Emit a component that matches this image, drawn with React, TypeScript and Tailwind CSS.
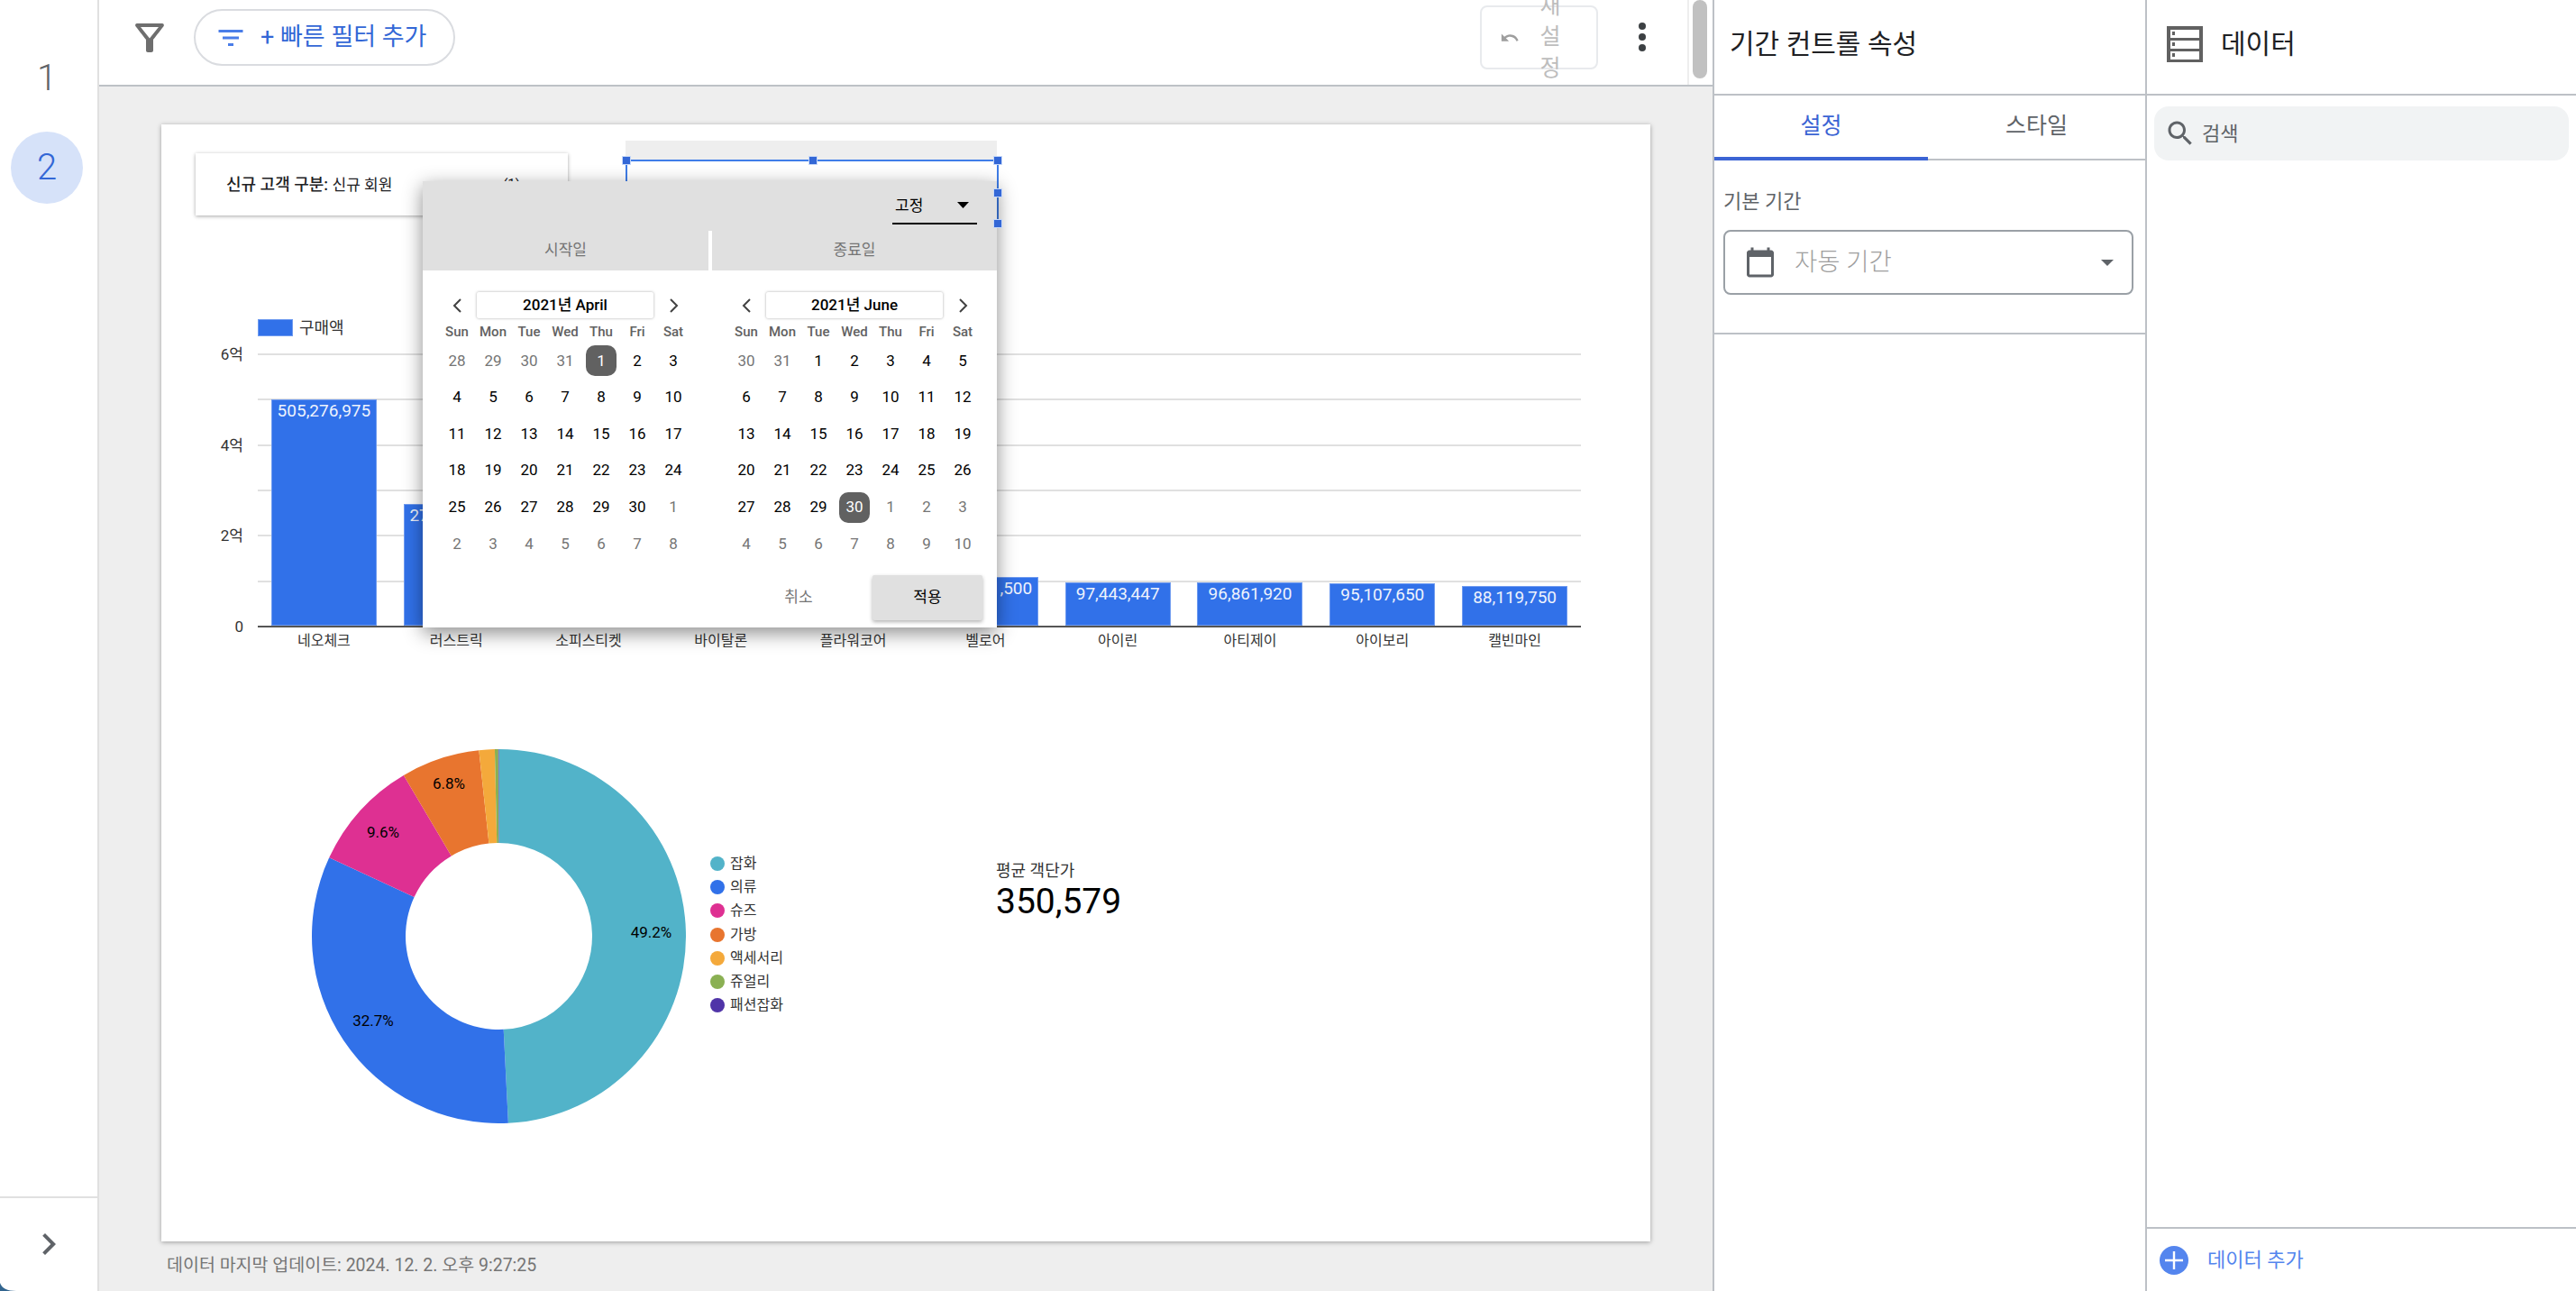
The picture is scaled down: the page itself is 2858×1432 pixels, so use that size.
const bars = [
  { name: "네오체크", value: 505276975, label: true },
  { name: "러스트릭", value: 272418300, label: true },
  { name: "소피스티켓", value: 186204150, label: false },
  { name: "바이탈론", value: 152730600, label: false },
  { name: "플라워코어", value: 121958250, label: false },
  { name: "벨로어", value: 109241500, label: true },
  { name: "아이린", value: 97443447, label: true },
  { name: "아티제이", value: 96861920, label: true },
  { name: "아이보리", value: 95107650, label: true },
  { name: "캘빈마인", value: 88119750, label: true },
]

const slices = [
  { name: "잡화", share: 49.2, color: "#52b3c9", label: "49.2%", lx: 169, ly: -4.5 },
  { name: "의류", share: 32.7, color: "#3171e9", label: "32.7%", lx: -139.5, ly: 93.5 },
  { name: "슈즈", share: 9.6, color: "#de3092", label: "9.6%", lx: -128.5, ly: -115.5 },
  { name: "가방", share: 6.8, color: "#e8752f", label: "6.8%", lx: -55.5, ly: -169.5 },
  { name: "액세서리", share: 1.35, color: "#f4a93b", label: "", lx: 0, ly: 0 },
  { name: "쥬얼리", share: 0.3, color: "#8ab053", label: "", lx: 0, ly: 0 },
  { name: "패션잡화", share: 0.05, color: "#5034a8", label: "", lx: 0, ly: 0 },
]

function point(r: number, pct: number) {
  const a = (pct / 100) * Math.PI * 2
  return `${207.5 + r * Math.sin(a)} ${207.5 - r * Math.cos(a)}`
}

function slicePath(from: number, to: number) {
  const large = to - from > 50 ? 1 : 0
  return `M${point(207.5, from)} A207.5 207.5 0 ${large} 1 ${point(207.5, to)} L${point(103.5, to)} A103.5 103.5 0 ${large} 0 ${point(103.5, from)} Z`
}

function Donut() {
  let start = 0
  return (
    <svg width="415" height="415" viewBox="0 0 415 415">
      {slices.map((s) => {
        const d = slicePath(start, start + s.share)
        start += s.share
        return <path key={s.name} d={d} fill={s.color} />
      })}
      {slices.filter((s) => s.label).map((s) => (
        <text key={s.name} x={207.5 + s.lx} y={207.5 + s.ly} textAnchor="middle" dominantBaseline="central" fontSize="17" fill="#000">
          {s.label}
        </text>
      ))}
    </svg>
  )
}

function BarChart() {
  return (
    <div className="absolute left-[107px] top-[254px] w-[1468px]">
      <div className="relative h-[304px]">
        <div className="absolute inset-0 flex flex-col justify-between">
          {[0, 1, 2, 3, 4, 5].map((i) => (
            <div key={i} className="h-[2px] bg-[#e0e0e0]" />
          ))}
          <div className="h-[2px] bg-[#555555]" />
        </div>
        <div className="relative grid h-full grid-cols-10 items-end pb-[2px]">
          {bars.map((b) => (
            <div key={b.name} className="flex justify-center">
              <div
                className="w-[117px] border border-[#6f9bf0] bg-[#3171e9] text-center text-[19px] leading-[24px] text-[#eef3fd]"
                style={{ height: (b.value / 600000000) * 298 }}
              >
                {b.label && b.value.toLocaleString("en-US")}
              </div>
            </div>
          ))}
        </div>
      </div>
      <div className="mt-[5px] grid grid-cols-10">
        {bars.map((b) => (
          <div key={b.name} className="text-center text-[16px] leading-[20px] text-[#333333]">
            {b.name}
          </div>
        ))}
      </div>
    </div>
  )
}

function monthCells(prevStart: number, prevEnd: number, nextCount: number) {
  const cells: { day: number; muted: boolean }[] = []
  for (let d = prevStart; d <= prevEnd; d++) cells.push({ day: d, muted: true })
  for (let d = 1; d <= 30; d++) cells.push({ day: d, muted: false })
  for (let d = 1; d <= nextCount; d++) cells.push({ day: d, muted: true })
  return cells
}

function Chevron({ left }: { left?: boolean }) {
  return (
    <svg width="12" height="16" viewBox="0 0 12 16" fill="none" stroke="#424242" strokeWidth="2">
      <path d={left ? "M10 1 L3 8 L10 15" : "M2 1 L9 8 L2 15"} />
    </svg>
  )
}

function Month({ title, cells, selected }: { title: string; cells: { day: number; muted: boolean }[]; selected: number }) {
  return (
    <div className="w-[280px]">
      <div className="flex h-[29px] items-center">
        <div className="flex w-[42px] justify-center pr-[3px]">
          <Chevron left />
        </div>
        <div className="flex h-[29px] w-[196px] items-center justify-center rounded-[2px] bg-white text-[17px] font-medium text-black shadow-[0_0_3px_rgba(0,0,0,0.35)]">
          {title}
        </div>
        <div className="flex w-[42px] justify-center pl-[3px]">
          <Chevron />
        </div>
      </div>
      <div className="mt-[4px] grid h-[23px] grid-cols-7">
        {["Sun", "Mon", "Tue", "Wed", "Thu", "Fri", "Sat"].map((d) => (
          <div key={d} className="text-center text-[15px] font-medium leading-[23px] text-[#616161]">
            {d}
          </div>
        ))}
      </div>
      <div className="grid grid-cols-7">
        {cells.map((c, i) => {
          const isSelected = !c.muted && c.day === selected
          return (
            <div key={i} className="flex h-[40.6px] items-center justify-center text-[17px]">
              {isSelected ? (
                <span className="flex h-[34px] w-[34px] items-center justify-center rounded-[10px] bg-[#616161] text-white">{c.day}</span>
              ) : (
                <span className={c.muted ? "text-[#757575]" : "text-black"}>{c.day}</span>
              )}
            </div>
          )
        })}
      </div>
    </div>
  )
}

function DatePopup() {
  return (
    <div className="absolute left-[290px] top-[63px] z-10 w-[637px] bg-white shadow-[0_6px_20px_rgba(0,0,0,0.45)]">
      <div className="flex h-[55px] justify-end bg-[#e0e0e0] pr-[22px] pt-[17px]">
        <div className="flex h-[31px] w-[94px] items-start justify-between border-b-2 border-black pl-[3px] pr-[9px]">
          <span className="text-[17px] leading-[20px] text-black">고정</span>
          <svg className="mt-[6px]" width="13" height="7" viewBox="0 0 13 7" fill="#000">
            <polygon points="0,0 13,0 6.5,7" />
          </svg>
        </div>
      </div>
      <div className="flex h-[44px] bg-[#e0e0e0]">
        <div className="flex w-[317px] items-center justify-center text-[17px] text-[#757575]">시작일</div>
        <div className="w-[4px] bg-white" />
        <div className="flex flex-1 items-center justify-center text-[17px] text-[#757575]">종료일</div>
      </div>
      <div className="flex gap-[41px] px-[18px] pt-[24px]">
        <Month title="2021년 April" cells={monthCells(28, 31, 8)} selected={1} />
        <Month title="2021년 June" cells={monthCells(30, 31, 10)} selected={30} />
      </div>
      <div className="flex justify-end gap-[21px] pb-[8px] pr-[16px] pt-[14px]">
        <button className="h-[50px] w-[122px] text-[17px] text-[#757575]">취소</button>
        <button className="h-[50px] w-[122px] rounded-[2px] bg-[#e0e0e0] text-[17px] text-black shadow-[0_2px_4px_rgba(0,0,0,0.3)]">적용</button>
      </div>
    </div>
  )
}

function Handle({ className }: { className: string }) {
  return <span className={`absolute z-20 h-[10px] w-[10px] border border-[#c6d8f8] bg-[#3367d6] ${className}`} />
}

function ReportPage() {
  return (
    <div className="relative h-[1239px] w-[1652px] bg-white shadow-[0_1px_5px_rgba(0,0,0,0.35)]">
      <div className="absolute left-[38px] top-[32px] flex h-[69px] w-[413px] items-center justify-between bg-white pl-[34px] pr-[53px] text-[#202124] shadow-[0_1px_4px_rgba(0,0,0,0.35)]">
        <span className="text-[18px]">
          <span className="font-medium">신규 고객 구분:</span> <span className="text-[17px]">신규 회원</span>
        </span>
        <span className="text-[15px]">(1)</span>
      </div>

      <div className="absolute left-[515px] top-[18px] h-[22px] w-[412px] bg-[#eeeeee]" />
      <div className="absolute left-[515px] top-[39px] h-[72px] w-[414px] border-2 border-[#3f7de8] bg-white">
        <Handle className="left-[-6px] top-[-6px]" />
        <Handle className="left-[201px] top-[-6px]" />
        <Handle className="right-[-6px] top-[-6px]" />
        <Handle className="right-[-6px] top-[30px]" />
        <Handle className="bottom-[-6px] right-[-6px]" />
      </div>

      <div className="absolute left-[107px] top-[216px] flex items-center gap-[7px]">
        <span className="h-[19px] w-[39px] border border-[#6f9bf0] bg-[#3171e9]" />
        <span className="text-[18px] leading-[19px] text-[#333333]">구매액</span>
      </div>

      <div className="absolute left-[41px] top-[242px] flex h-[328px] w-[50px] flex-col items-end justify-between text-[17px] leading-[26px] text-[#333333]">
        <span>6억</span>
        <span>4억</span>
        <span>2억</span>
        <span>0</span>
      </div>

      <BarChart />
      <DatePopup />

      <div className="absolute left-[167px] top-[693px]">
        <Donut />
      </div>

      <div className="absolute left-[609px] top-[807px] flex flex-col text-[16px] text-[#333333]">
        {slices.map((s) => (
          <div key={s.name} className="flex h-[26.2px] items-center gap-[6px]">
            <span className="h-[16px] w-[16px] rounded-full" style={{ backgroundColor: s.color }} />
            <span>{s.name}</span>
          </div>
        ))}
      </div>

      <div className="absolute left-[926px] top-[819px] flex flex-col gap-[2px]">
        <span className="text-[18px] leading-[18px] text-[#333333]">평균 객단가</span>
        <span className="text-[39px] leading-[46px] text-black">350,579</span>
      </div>
    </div>
  )
}

function TopBar() {
  return (
    <header className="relative flex h-[96px] items-start border-b-2 border-[#bdc1c6] bg-white">
      <svg className="ml-[32px] mt-[18px]" width="48" height="48" viewBox="0 0 24 24" fill="#6e6e6e">
        <path d="M7 6h10l-5.01 6.3L7 6zm-2.75-.39C6.27 8.2 10 13 10 13v6c0 .55.45 1 1 1h2c.55 0 1-.45 1-1v-6s3.72-4.8 5.74-7.39c.51-.66.04-1.61-.79-1.61H5.04c-.83 0-1.3.95-.79 1.61z" />
      </svg>
      <button className="ml-[25px] mt-[10px] flex h-[63px] w-[290px] items-center rounded-full border-2 border-[#dadce0] pl-[21px] text-[#3367d6]">
        <svg width="36" height="36" viewBox="0 0 24 24" fill="#4a7de8">
          <path d="M10 18h4v-2h-4v2zM3 6v2h18V6H3zm3 7h12v-2H6v2z" />
        </svg>
        <span className="ml-[15px] whitespace-nowrap text-[27px]">+ 빠른 필터 추가</span>
      </button>
      <div className="ml-auto mr-[127px] mt-[6px] flex h-[71px] w-[131px] items-center justify-start gap-[21px] rounded-[8px] border-2 border-[#e8eaed] pl-[20px]">
        <svg width="22" height="22" viewBox="0 0 24 24" fill="#9e9e9e">
          <path d="M12.5 8c-2.65 0-5.05.99-6.9 2.6L2 7v9h9l-3.62-3.62c1.39-1.16 3.16-1.88 5.12-1.88 3.54 0 6.55 2.31 7.6 5.5l2.37-.78C21.08 11.03 17.15 8 12.5 8z" />
        </svg>
        <span className="w-[26px] text-center text-[25px] leading-[34.5px] text-[#bdbdbd]">재 설 정</span>
      </div>
      <svg className="absolute left-[1688px] top-[17px]" width="48" height="48" viewBox="0 0 24 24" fill="#3c4043">
        <circle cx="12" cy="6" r="2" />
        <circle cx="12" cy="12" r="2" />
        <circle cx="12" cy="18" r="2" />
      </svg>
      <div className="absolute right-0 top-0 h-[94px] w-[28px] border-l-2 border-[#eeeeee] bg-white">
        <div className="ml-[4px] h-[87px] w-[16px] rounded-[8px] bg-[#c1c1c1]" />
      </div>
    </header>
  )
}

function PropertyPanel() {
  return (
    <aside className="flex w-[480px] shrink-0 flex-col border-l-2 border-[#bdc1c6] bg-white">
      <div className="flex h-[106px] items-center border-b-2 border-[#bdc1c6] pb-[8px] pl-[17px] text-[30px] text-[#202124]">기간 컨트롤 속성</div>
      <div className="flex h-[72px] border-b-2 border-[#bdc1c6]">
        <div className="-mb-[2px] flex w-[237px] items-center justify-center border-b-4 border-[#3b64d4] text-[25px] text-[#3b64d4]">설정</div>
        <div className="flex flex-1 items-center justify-center pb-[2px] text-[25px] text-[#5f6368]">스타일</div>
      </div>
      <div className="h-[193px] border-b-2 border-[#bdc1c6] px-[10px]">
        <div className="mt-[32px] text-[22px] leading-[28px] text-[#5f6368]">기본 기간</div>
        <div className="mt-[17px] flex h-[72px] w-[455px] items-center rounded-[8px] border-2 border-[#9aa0a6] pl-[21px] pr-[20px]">
          <svg width="36" height="36" viewBox="0 0 24 24" fill="#5f6368">
            <path d="M20 3h-1V1h-2v2H7V1H5v2H4c-1.1 0-2 .9-2 2v16c0 1.1.9 2 2 2h16c1.1 0 2-.9 2-2V5c0-1.1-.9-2-2-2zm0 18H4V8h16v13z" />
          </svg>
          <span className="ml-[20px] text-[27.5px] font-light text-[#9e9e9e]">자동 기간</span>
          <svg className="ml-auto" width="14" height="7" viewBox="0 0 14 7" fill="#5f6368">
            <polygon points="0,0 14,0 7,7" />
          </svg>
        </div>
      </div>
    </aside>
  )
}

function DataPanel() {
  return (
    <aside className="flex w-[478px] shrink-0 flex-col border-l-2 border-[#bdc1c6] bg-white">
      <div className="flex h-[106px] items-start border-b-2 border-[#bdc1c6] pl-[22px] pt-[29px]">
        <svg width="40" height="40" viewBox="0 0 40 40">
          <rect width="40" height="40" fill="#616161" />
          <rect x="4" y="4" width="32" height="9" fill="#fff" />
          <rect x="4" y="16" width="32" height="9" fill="#fff" />
          <rect x="4" y="28" width="32" height="9" fill="#fff" />
          <rect x="6" y="6" width="3" height="4" fill="#616161" />
          <rect x="6" y="18" width="3" height="4" fill="#616161" />
          <rect x="6" y="30" width="3" height="4" fill="#616161" />
        </svg>
        <span className="ml-[20px] text-[30px] leading-[40px] text-[#202124]">데이터</span>
      </div>
      <div className="mx-[8px] mt-[12px] flex h-[60px] items-center rounded-[16px] bg-[#f1f3f4] pl-[11px]">
        <svg width="36" height="36" viewBox="0 0 24 24" fill="#5f6368">
          <path d="M15.5 14h-.79l-.28-.27C15.41 12.59 16 11.11 16 9.5 16 5.91 13.09 3 9.5 3S3 5.91 3 9.5 5.91 16 9.5 16c1.61 0 3.09-.59 4.23-1.57l.27.28v.79l5 4.99L20.49 19l-4.99-5zm-6 0C7.01 14 5 11.99 5 9.5S7.01 5 9.5 5 14 7.01 14 9.5 11.99 14 9.5 14z" />
        </svg>
        <span className="ml-[6px] text-[22px] text-[#5f6368]">검색</span>
      </div>
      <div className="mt-auto flex h-[71px] items-center border-t-2 border-[#bdc1c6] pl-[14px]">
        <svg width="32" height="32" viewBox="0 0 32 32">
          <circle cx="16" cy="16" r="16" fill="#5485ee" />
          <path d="M16 6v20M6 16h20" stroke="#fff" strokeWidth="2.4" />
        </svg>
        <span className="ml-[21px] text-[22px] text-[#5485ee]">데이터 추가</span>
      </div>
    </aside>
  )
}

export default function App() {
  return (
    <div className="relative flex h-[1432px] w-[2858px] overflow-hidden bg-white font-[Roboto,'Noto_Sans_CJK_KR',sans-serif]">
      <nav className="flex w-[110px] shrink-0 flex-col border-r-2 border-[#e0e0e0] bg-white">
        <div className="flex flex-1 flex-col gap-[19px] pl-[12px] pt-[47px] text-[40px] font-light">
          <div className="flex h-[80px] w-[80px] items-center justify-center text-[#5f6368]">1</div>
          <div className="flex h-[80px] w-[80px] items-center justify-center rounded-full bg-[#d6e2f9] text-[#3367d6]">2</div>
        </div>
        <div className="flex h-[105px] items-start border-t-2 border-[#e0e0e0] pl-[30px] pt-[27px]">
          <svg width="48" height="48" viewBox="0 0 24 24" fill="#5f6368">
            <path d="M10 6L8.59 7.41 13.17 12l-4.58 4.59L10 18l6-6z" />
          </svg>
        </div>
      </nav>

      <main className="flex min-w-0 flex-1 flex-col">
        <TopBar />
        <div className="flex-1 bg-[#eeeeee] pl-[69px] pt-[42px]">
          <ReportPage />
          <div className="ml-[6px] mt-[18px] text-[19.5px] leading-[18px] text-[#757575]">데이터 마지막 업데이트: 2024. 12. 2. 오후 9:27:25</div>
        </div>
      </main>

      <PropertyPanel />
      <DataPanel />

      <svg className="absolute bottom-0 left-0" width="18" height="9" viewBox="0 0 18 9" fill="#33658f">
        <path d="M0 0C2 6 8 9 18 9L0 9Z" />
      </svg>
    </div>
  )
}
